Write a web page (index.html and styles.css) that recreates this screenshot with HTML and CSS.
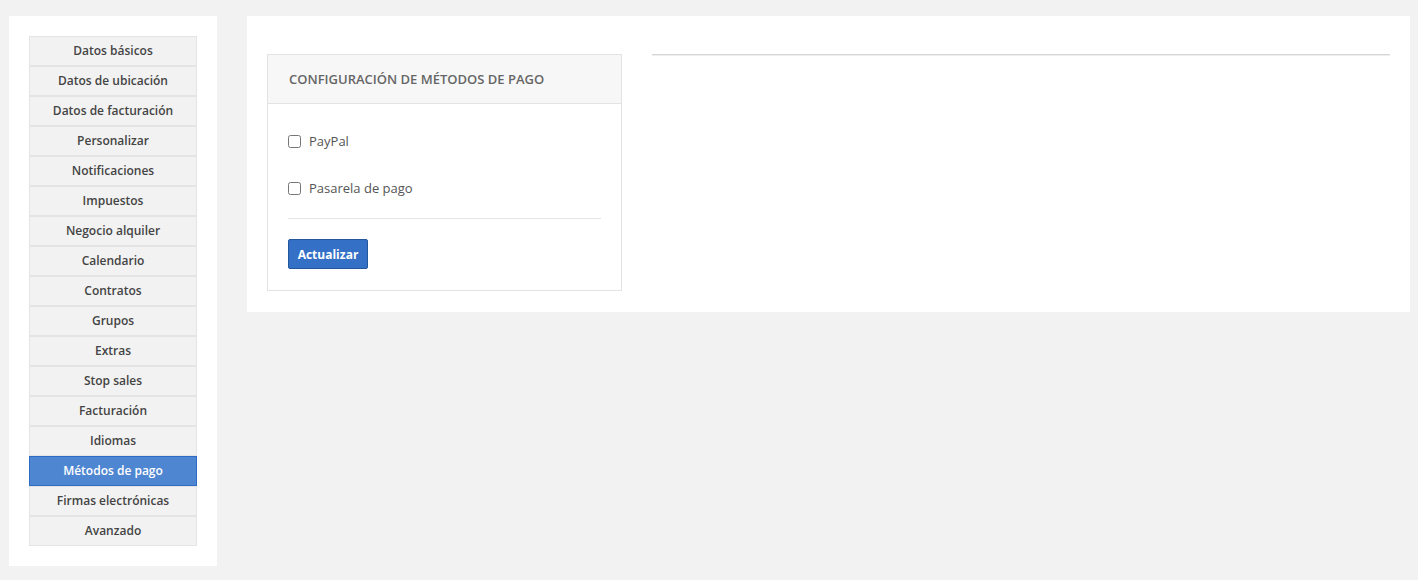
FILE: index.html
```html
<!DOCTYPE html>
<html lang="es">
<head>
<meta charset="utf-8">
<title>Métodos de pago</title>
<link rel="stylesheet" href="styles.css">
</head>
<body>
<div class="layout">
  <aside class="sidebar">
    <nav class="nav">
      <a class="nav-item">Datos básicos</a>
      <a class="nav-item">Datos de ubicación</a>
      <a class="nav-item">Datos de facturación</a>
      <a class="nav-item">Personalizar</a>
      <a class="nav-item">Notificaciones</a>
      <a class="nav-item">Impuestos</a>
      <a class="nav-item">Negocio alquiler</a>
      <a class="nav-item">Calendario</a>
      <a class="nav-item">Contratos</a>
      <a class="nav-item">Grupos</a>
      <a class="nav-item">Extras</a>
      <a class="nav-item">Stop sales</a>
      <a class="nav-item">Facturación</a>
      <a class="nav-item">Idiomas</a>
      <a class="nav-item active">Métodos de pago</a>
      <a class="nav-item">Firmas electrónicas</a>
      <a class="nav-item">Avanzado</a>
    </nav>
  </aside>
  <main class="content">
    <section class="card">
      <header class="card-header">Configuración de métodos de pago</header>
      <div class="card-body">
        <label class="check"><input type="checkbox"><span>PayPal</span></label>
        <label class="check"><input type="checkbox"><span>Pasarela de pago</span></label>
        <hr class="divider">
        <button class="btn">Actualizar</button>
      </div>
    </section>
    <div class="aside-col">
      <hr class="rule">
    </div>
  </main>
</div>
</body>
</html>
```

FILE: styles.css
```css
* { box-sizing: border-box; }
html, body { margin: 0; padding: 0; }
body {
  background: #f2f2f2;
  font-family: "Open Sans", "Liberation Sans", sans-serif;
  color: #444;
}
.layout {
  display: flex;
  align-items: flex-start;
  gap: 30px;
  padding: 16px 8px 0 9px;
}
.sidebar {
  width: 208px;
  flex: none;
  background: #fff;
  padding: 20px;
}
.nav { display: flex; flex-direction: column; }
.nav-item {
  display: block;
  height: 30px;
  line-height: 28px;
  text-align: center;
  background: #f2f2f2;
  border: 1px solid #e4e4e4;
  font-size: 12px;
  font-weight: 600;
  color: #444;
  text-decoration: none;
}
.nav-item.active {
  background: #4f86d2;
  border-color: #2e6bc2;
  color: #fff;
}
.content {
  flex: 1;
  background: #fff;
  display: flex;
  align-items: flex-start;
  gap: 30px;
  padding: 38px 20px 21px 20px;
}
.card {
  width: 355px;
  flex: none;
  border: 1px solid #e3e3e3;
}
.card-header {
  height: 49px;
  background: #f7f7f7;
  border-bottom: 1px solid #e3e3e3;
  padding: 0 20px 0 21px;
  display: flex;
  align-items: center;
  text-transform: uppercase;
  font-size: 13px;
  font-weight: 600;
  color: #666;
}
.card-body {
  padding: 22px 20px 21px 20px;
}
.check {
  display: flex;
  align-items: center;
  height: 30px;
  margin-bottom: 17px;
  font-size: 13px;
  color: #555;
}
.check input {
  margin: 0 8px 0 0;
  width: 13px;
  height: 13px;
}
.divider {
  margin: -2px 0 20px 0;
  border: 0;
  border-top: 1px solid #e5e5e5;
}
.btn {
  display: block;
  width: 80px;
  height: 30px;
  padding: 0;
  background: #3470c6;
  border: 1px solid #24569b;
  border-radius: 2px;
  color: #fff;
  font-family: "Open Sans", "Liberation Sans", sans-serif;
  font-size: 12px;
  font-weight: 700;
}
.aside-col { flex: 1; }
.rule {
  margin: 0;
  border: 0;
  border-top: 1px solid #d6d6d6;
  border-bottom: 1px solid #eeeeee;
}
```
